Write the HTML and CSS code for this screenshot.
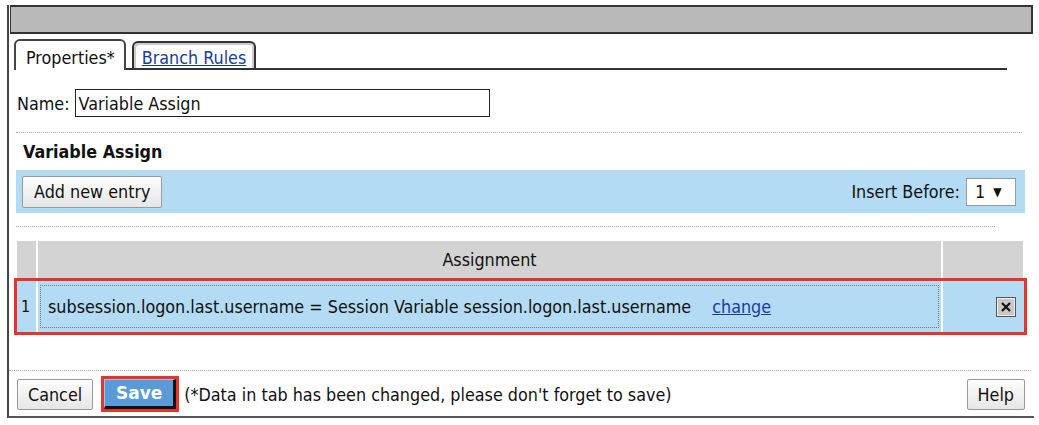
FILE: index.html
```html
<!DOCTYPE html>
<html>
<head>
<meta charset="utf-8">
<link rel="stylesheet" href="styles.css">
</head>
<body>
<div class="frame">
  <div class="titlebar"></div>
  <div class="tabs">
    <div class="tab active">Properties*</div>
    <div class="tab"><a href="#">Branch Rules</a></div>
  </div>
  <div class="name-row">
    <span class="lbl">Name:</span>
    <div class="input">Variable Assign</div>
  </div>
  <div class="dots dots-a"></div>
  <div class="section-title">Variable Assign</div>
  <div class="toolbar">
    <div class="btn">Add new entry</div>
    <div class="insert">
      <span>Insert Before:</span>
      <div class="select">1 <span class="arrow">&#9660;</span></div>
    </div>
  </div>
  <div class="dots dots-b"></div>
  <div class="grid">
    <div class="head">
      <div class="h-idx"></div>
      <div class="h-main">Assignment</div>
      <div class="h-del"></div>
    </div>
    <div class="row">
      <div class="r-idx">1</div>
      <div class="r-main">
        <div class="r-box"><span>subsession.logon.last.username = Session Variable session.logon.last.username</span><a href="#">change</a></div>
      </div>
      <div class="r-del">
        <svg width="20" height="20" viewBox="0 0 20 20">
          <rect x="0.5" y="0.5" width="19" height="19" fill="#c8c8c8" stroke="#555"/>
          <rect x="1.5" y="1.5" width="17" height="17" fill="none" stroke="#eee" stroke-width="1"/>
          <path d="M6 6 L14 14 M14 6 L6 14" stroke="#111" stroke-width="2.2"/>
        </svg>
      </div>
    </div>
  </div>
  <div class="dots dots-c"></div>
  <div class="footer">
    <div class="btn small">Cancel</div>
    <div class="save-wrap"><div class="save">Save</div></div>
    <span class="note">(*Data in tab has been changed, please don't forget to save)</span>
    <div class="btn small help">Help</div>
  </div>
</div>
</body>
</html>
```
FILE: styles.css
```css
* { box-sizing: border-box; }
body {
  margin: 0;
  background: #fff;
  font-family: "DejaVu Sans Condensed", "DejaVu Sans", sans-serif;
  font-size: 17.8px;
  color: #111;
}
.frame {
  margin: 5px 0 0 7px;
  width: 1027px;
  height: 413px;
  border-left: 2px solid #444;
  border-bottom: 2px solid #555;
  position: relative;
}
.titlebar {
  margin-left: 1px;
  width: 1023px;
  height: 29px;
  background: #b9b9b9;
  border: 2px solid #333;
  border-left-width: 1px;
}
.tabs {
  margin: 6px 0 0 5px;
  width: 993px;
  height: 30px;
  border-bottom: 2px solid #333;
  display: flex;
  align-items: flex-end;
  gap: 6px;
}
.tab {
  height: 28px;
  padding: 0 10px;
  border: 2px solid #333;
  border-bottom: none;
  border-radius: 6px 6px 0 0;
  box-shadow: inset 2px 2px 0 #ccc, inset -2px 0 0 #ccc;
  display: flex;
  align-items: center;
  padding-top: 3px;
  white-space: nowrap;
}
.tab.active {
  height: 31px;
  margin-bottom: -2px;
  background: #fff;
  box-shadow: none;
  border-color: #444;
  padding: 3px 0 0 10px;
  width: 112px;
}
.tab:not(.active) { width: 124px; height: 27px; justify-content: center; padding: 3px 0 0 0; }
.tab a { color: #1a3aa0; }
.name-row {
  margin: 19px 0 0 8px;
  display: flex;
  align-items: center;
  gap: 5px;
}
.input {
  width: 415px;
  height: 28px;
  border: 1px solid #222;
  padding: 0 3px;
  display: flex;
  align-items: center;
}
.dots {
  border-top: 1px dotted #aaa;
  height: 0;
}
.dots-a { margin: 15px 0 0 7px; width: 1006px; }
.section-title {
  font-weight: bold;
  margin: 8px 0 0 14px;
  height: 22px;
  line-height: 22px;
}
.toolbar {
  margin: 7px 0 0 7px;
  width: 1009px;
  height: 43px;
  background: #b3dbf3;
  display: flex;
  align-items: center;
  justify-content: space-between;
  padding: 0 9px 0 6px;
}
.btn {
  height: 32px;
  padding: 0 11px;
  border: 1px solid #999;
  border-radius: 2px;
  background: linear-gradient(#fdfdfd, #e6e6e6);
  display: flex;
  align-items: center;
}
.insert { display: flex; align-items: center; gap: 6px; }
.select {
  width: 50px;
  height: 28px;
  border: 1px solid #999;
  background: #fff;
  display: flex;
  align-items: center;
  padding-left: 8px;
  gap: 8px;
}
.arrow { font-size: 12px; }
.dots-b { margin: 13px 0 0 7px; width: 979px; }
.grid { margin: 14px 0 0 5px; width: 1013px; }
.head {
  display: flex;
  height: 37px;
  background: #d3d3d3;
  margin-left: 3px;
  width: 1006px;
}
.h-idx { width: 21px; border-right: 2px solid #fff; }
.h-main {
  width: 905px;
  border-right: 2px solid #fff;
  display: flex;
  align-items: center;
  justify-content: center;
}
.h-del { flex: 1; }
.row {
  display: flex;
  height: 57px;
  background: #b3dbf3;
  border: 3px solid #e8322a;
}
.r-idx {
  width: 21px;
  border-right: 2px solid #fff;
  display: flex;
  align-items: center;
  padding-left: 4px;
  font-size: 16px;
}
.r-main {
  width: 905px;
  border-right: 2px solid #fff;
  padding: 4px 2px;
}
.r-box {
  height: 100%;
  border: 1px dotted #777;
  display: flex;
  align-items: center;
  padding-left: 7px;
  white-space: nowrap;
}
.r-box a { color: #1a3aa0; margin-left: 21px; }
.r-del {
  flex: 1;
  display: flex;
  align-items: center;
  justify-content: flex-end;
  padding-right: 8px;
}
.r-del svg { display: block; }
.dots-c { margin: 35px 0 0 0; width: 1022px; }
.footer {
  margin: 5px 0 0 8px;
  width: 1010px;
  display: flex;
  align-items: center;
}
.btn.small { height: 31px; padding: 0 10px; }
.save-wrap {
  margin-left: 8px;
  border: 3px solid #e8322a;
  padding: 0;
}
.save {
  width: 72px;
  height: 30px;
  background: #5a9ad6;
  color: #fff;
  font-weight: bold;
  font-family: "DejaVu Sans", sans-serif;
  font-size: 17px;
  display: flex;
  align-items: center;
  justify-content: center;
  border-right: 3px solid #111;
  border-bottom: 3px solid #111;
  border-top: 1px solid #9cc4ea;
  border-left: 1px solid #9cc4ea;
}
.note { margin-left: 5px; }
.help { margin-left: auto; padding: 0 5px; margin-right: 2px; }
```
